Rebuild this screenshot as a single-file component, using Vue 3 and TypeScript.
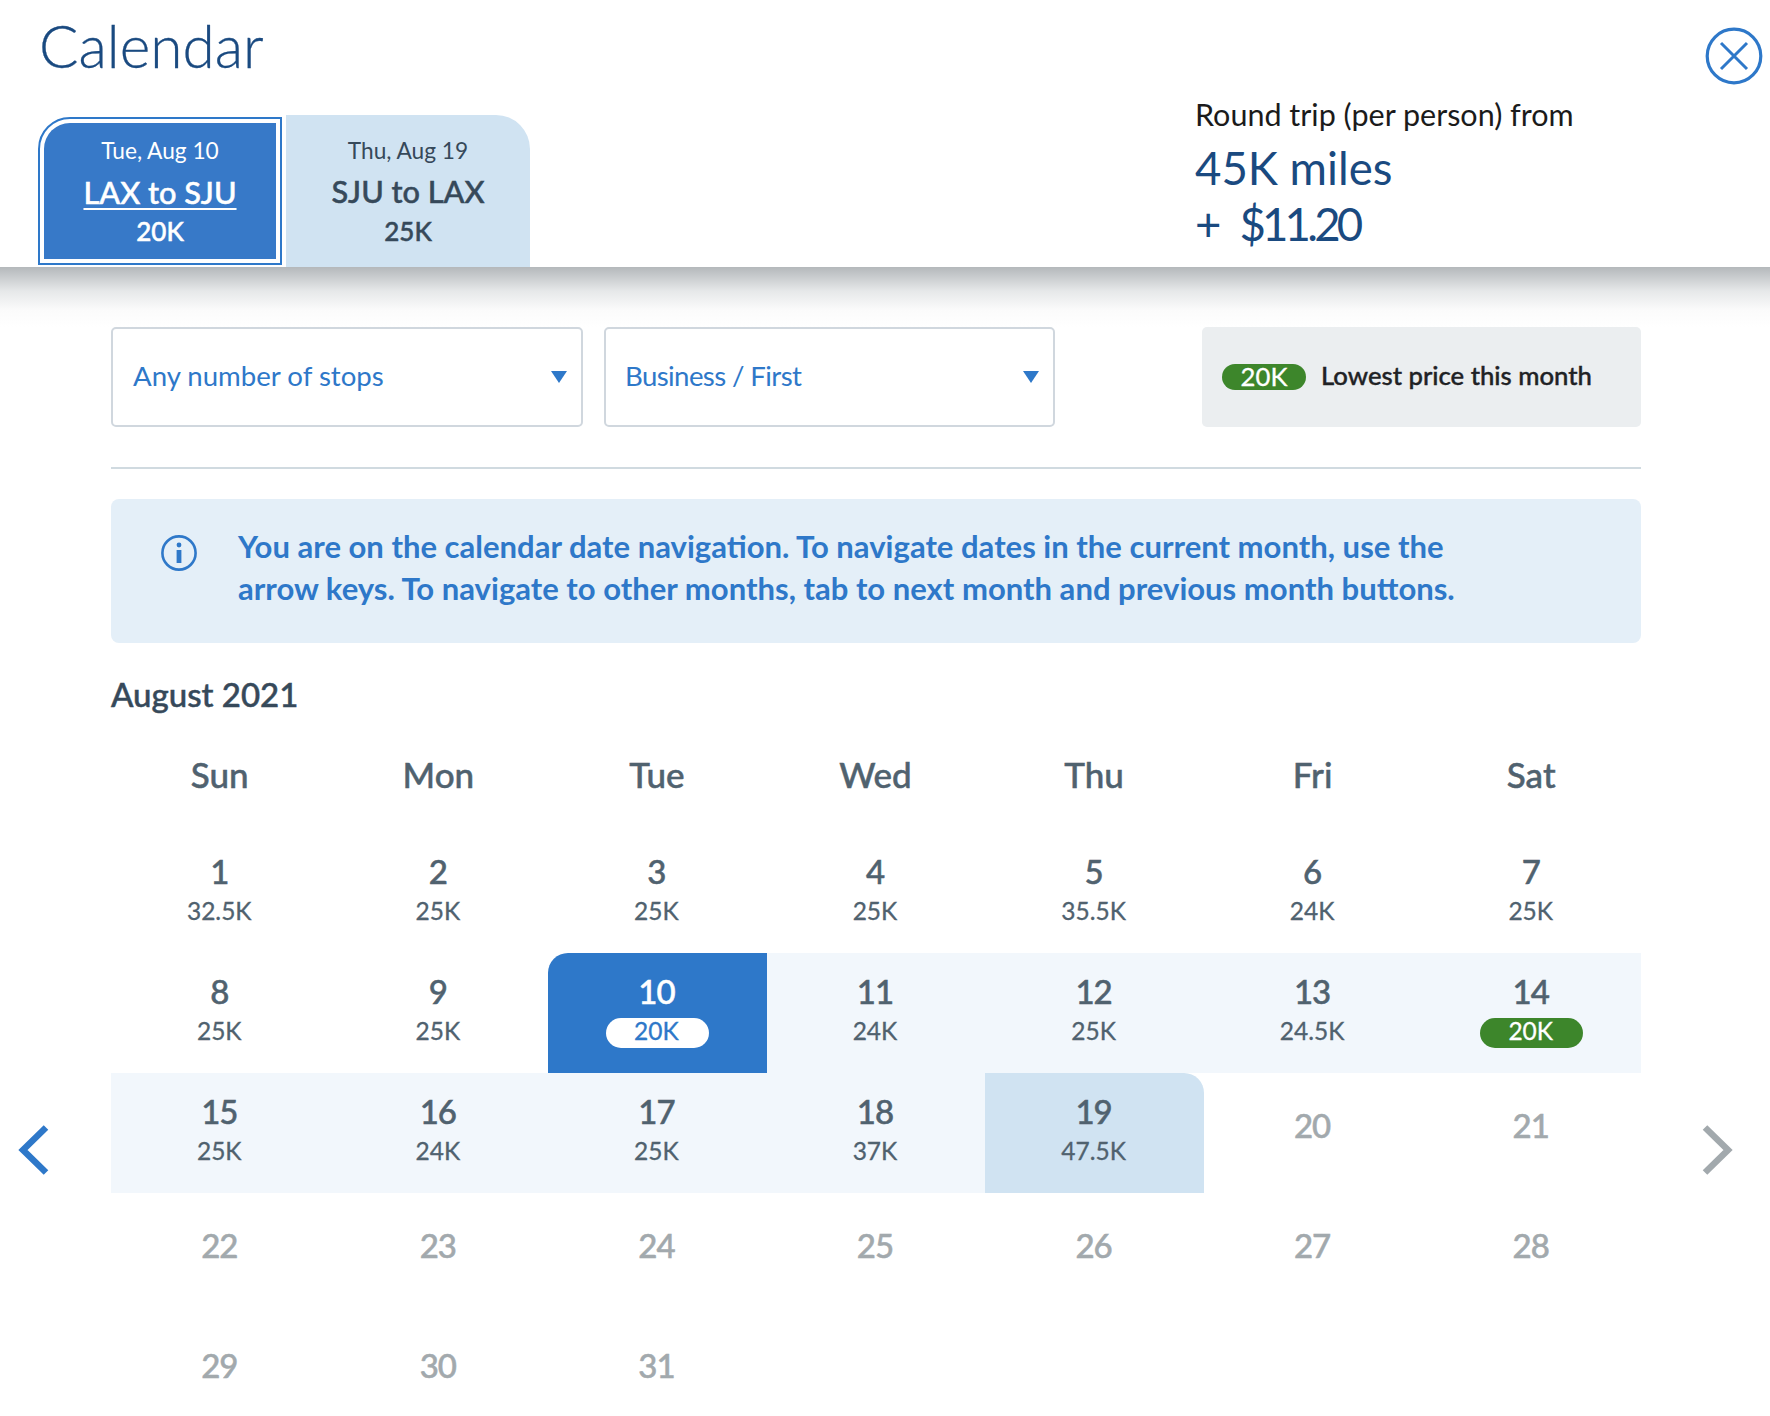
<script setup lang="ts">
interface Cell { day: number | null; price?: string; kind?: string; lowest?: boolean }
const weekdays = ['Sun', 'Mon', 'Tue', 'Wed', 'Thu', 'Fri', 'Sat']
const prices: Record<number, string> = {
  1: '32.5K', 2: '25K', 3: '25K', 4: '25K', 5: '35.5K', 6: '24K', 7: '25K',
  8: '25K', 9: '25K', 10: '20K', 11: '24K', 12: '25K', 13: '24.5K', 14: '20K',
  15: '25K', 16: '24K', 17: '25K', 18: '37K', 19: '47.5K'
}
const cells: Cell[] = []
for (let d = 1; d <= 31; d++) {
  let kind = ''
  if (d === 10) kind = 'start'
  else if (d === 19) kind = 'end'
  else if (d > 10 && d < 19) kind = 'range'
  else if (d > 19) kind = 'off'
  cells.push({ day: d, price: prices[d], kind, lowest: d === 14 })
}
</script>

<template>
  <div class="page">
    <header class="head">
      <div class="head-left">
        <h1 class="title">Calendar</h1>
        <div class="tabs">
          <div class="tab tab-active">
            <div class="tab-inner">
              <span class="tab-date">Tue, Aug 10</span>
              <span class="tab-route tab-link">LAX to SJU</span>
              <span class="tab-price">20K</span>
            </div>
          </div>
          <div class="tab tab-next">
            <span class="tab-date">Thu, Aug 19</span>
            <span class="tab-route">SJU to LAX</span>
            <span class="tab-price">25K</span>
          </div>
        </div>
      </div>
      <div class="fare">
        <div class="fare-label">Round trip (per person) from</div>
        <div class="fare-value">45K miles</div>
        <div class="fare-value fare-money">+ $11.20</div>
      </div>
      <svg class="close" width="58" height="58" viewBox="0 0 58 58" fill="none" stroke="#2e78c9">
        <circle cx="29" cy="29" r="26.8" stroke-width="3.2" />
        <path d="M16 16 L42 42 M42 16 L16 42" stroke-width="3" />
      </svg>
    </header>
    <div class="shade"></div>

    <main class="main">
      <div class="toolbar">
        <div class="select select-stops">
          <span class="select-label">Any number of stops</span>
          <svg width="16" height="12" viewBox="0 0 16 12"><path d="M0 0H16L8 12Z" fill="#2e78c9" /></svg>
        </div>
        <div class="select select-cabin">
          <span class="select-label">Business / First</span>
          <svg width="16" height="12" viewBox="0 0 16 12"><path d="M0 0H16L8 12Z" fill="#2e78c9" /></svg>
        </div>
        <div class="legend">
          <span class="legend-pill">20K</span>
          <span class="legend-text">Lowest price this month</span>
        </div>
      </div>
      <div class="rule"></div>
      <div class="info">
        <svg class="info-icon" width="36" height="36" viewBox="0 0 36 36" fill="none">
          <circle cx="18" cy="18" r="16.6" stroke="#2e78c9" stroke-width="2.6" />
          <circle cx="18" cy="10" r="2.4" fill="#2e78c9" />
          <rect x="15.6" y="15" width="4.8" height="13" fill="#2e78c9" />
        </svg>
        <p class="info-text">You are on the calendar date navigation. To navigate dates in the current month, use the<br />arrow keys. To navigate to other months, tab to next month and previous month buttons.</p>
      </div>
      <h2 class="month">August 2021</h2>
      <div class="weekdays">
        <div v-for="w in weekdays" :key="w" class="weekday">{{ w }}</div>
      </div>
      <div class="grid">
        <div v-for="c in cells" :key="c.day ?? 0" class="cell" :class="c.kind">
          <span class="num">{{ c.day }}</span>
          <span v-if="c.price" class="price" :class="{ low: c.lowest }">{{ c.price }}</span>
        </div>
      </div>
    </main>

    <svg class="nav nav-prev" width="32" height="50" viewBox="0 0 32 50" fill="none">
      <path d="M29 2.5 L6 25 L29 47.5" stroke="#2e78c9" stroke-width="6.5" />
    </svg>
    <svg class="nav nav-next" width="32" height="50" viewBox="0 0 32 50" fill="none">
      <path d="M3 2.5 L26 25 L3 47.5" stroke="#a2a9ad" stroke-width="6.5" />
    </svg>
  </div>
</template>

<style>
html, body { margin: 0; background: #fff; }
</style>

<style scoped>
.page {
  position: relative;
  width: 1770px;
  height: 1416px;
  overflow: hidden;
  background: #fff;
  font-family: Lato, "Open Sans", sans-serif;
  color: #50626f;
}
.head {
  display: flex;
  height: 267px;
  padding-left: 38px;
  box-sizing: border-box;
}
.head-left {
  width: 1157px;
  display: flex;
  flex-direction: column;
}
.title {
  margin: 0;
  height: 115px;
  padding-left: 1px;
  font-size: 58.5px;
  font-weight: 300;
  line-height: 90px;
  color: #1a4a80;
  -webkit-text-stroke: 0.3px currentColor;
}
.tabs {
  display: flex;
  align-items: flex-end;
  gap: 4px;
}
.tab {
  box-sizing: border-box;
  width: 244px;
  text-align: center;
}
.tab-date, .tab-route, .tab-price { display: block; }
.tab-active {
  height: 148px;
  margin-bottom: 2px;
  padding: 4px;
  border: 2px solid #2e78c9;
  border-top-left-radius: 32px;
}
.tab-inner {
  height: 136px;
  background: #3779c8;
  border-top-left-radius: 26px;
  color: #fff;
  padding-top: 13px;
  box-sizing: border-box;
}
.tab-inner .tab-price { margin-top: 2px; }
.tab-next {
  height: 152px;
  background: #d0e3f2;
  border-top-right-radius: 34px;
  padding-top: 21px;
  color: #36495a;
}
.tab-next .tab-route { margin-top: 7px; }
.tab-date {
  font-size: 22.7px;
  line-height: 30px;
}
.tab-route {
  margin-top: 8px;
  font-size: 30.7px;
  font-weight: 500;
  line-height: 38px;
  -webkit-text-stroke: 0.5px currentColor;
}
.tab-link { text-decoration: underline; text-underline-offset: 4px; text-decoration-thickness: 2px; }
.tab-price {
  margin-top: 3px;
  font-size: 26px;
  font-weight: 500;
  line-height: 34px;
  -webkit-text-stroke: 0.5px currentColor;
}
.fare { padding-top: 96px; }
.fare-label {
  font-size: 30.5px;
  line-height: 36px;
  color: #1b1b1b;
}
.fare-value {
  font-size: 45.5px;
  line-height: 56px;
  color: #1a4a80;
}
.fare-label + .fare-value { margin-top: 8px; }
.fare-money { letter-spacing: -3.8px; word-spacing: 14px; }
.close {
  position: absolute;
  left: 1705px;
  top: 27px;
}
.shade {
  height: 60px;
  background: linear-gradient(#b4b8bb, #e6e8e9 40%, #fbfbfb 72%, #fff);
}
.main {
  padding: 0 129px 0 111px;
}
.toolbar {
  display: flex;
  height: 100px;
}
.select {
  box-sizing: border-box;
  display: flex;
  align-items: center;
  justify-content: space-between;
  border: 2px solid #d0d7de;
  border-radius: 5px;
  padding: 0 14px 0 20px;
  font-size: 27.6px;
  color: #2e78c9;
}
.select-label { padding-bottom: 4px; }
.select-stops { width: 472px; }
.select-cabin { width: 451px; margin-left: 21px; padding-left: 19px; }
.select-cabin .select-label { letter-spacing: -0.6px; }
.legend {
  box-sizing: border-box;
  width: 439px;
  margin-left: auto;
  display: flex;
  align-items: center;
  gap: 15px;
  padding-left: 20px;
  background: #ebeef0;
  border-radius: 5px;
  font-size: 25.7px;
  font-weight: 500;
  color: #1f2225;
}
.legend-text {
  padding-bottom: 4px;
  -webkit-text-stroke: 0.4px currentColor;
}
.legend-pill {
  width: 84px;
  height: 26px;
  border-radius: 13px;
  background: #3d862b;
  color: #fff;
  text-align: center;
  line-height: 24px;
  font-weight: 400;
  -webkit-text-stroke: 0.3px currentColor;
}
.rule {
  height: 2px;
  margin-top: 40px;
  background: #d0dae0;
}
.info {
  box-sizing: border-box;
  height: 144px;
  margin-top: 30px;
  display: flex;
  padding: 26px 0 0 50px;
  gap: 41px;
  background: #e4eff8;
  border-radius: 8px;
}
.info-icon { margin-top: 10px; flex: none; }
.info-text {
  margin: 0;
  font-size: 31.05px;
  font-weight: 700;
  line-height: 42px;
  color: #2e78c9;
  white-space: nowrap;
}
.month {
  margin: 30px 0 0;
  font-size: 33px;
  font-weight: 500;
  line-height: 42px;
  color: #36495a;
  -webkit-text-stroke: 0.5px currentColor;
}
.weekdays {
  display: grid;
  grid-template-columns: repeat(7, 1fr);
  margin-top: 39px;
  height: 79px;
}
.weekday {
  text-align: center;
  font-size: 35px;
  font-weight: 500;
  line-height: 40px;
  padding-right: 1px;
  -webkit-text-stroke: 0.5px currentColor;
}
.grid {
  display: grid;
  grid-template-columns: repeat(7, 1fr);
  grid-auto-rows: 120px;
}
.cell {
  display: flex;
  flex-direction: column;
  align-items: center;
  padding-top: 17px;
  box-sizing: border-box;
}
.num {
  font-size: 33px;
  font-weight: 500;
  line-height: 42px;
  letter-spacing: -1px;
  padding-right: 2px;
  -webkit-text-stroke: 0.5px currentColor;
}
.price {
  box-sizing: border-box;
  width: 103px;
  height: 30px;
  margin-top: 6px;
  padding-right: 2px;
  border-radius: 15px;
  font-size: 24.5px;
  line-height: 26px;
  text-align: center;
  -webkit-text-stroke: 0.3px currentColor;
}
.price.low { background: #3d862b; color: #fff; }
.range { background: #f2f7fc; }
.start { background: #2e78c9; border-top-left-radius: 20px; color: #fff; }
.start .price { background: #fff; color: #2e78c9; }
.end { background: #d0e3f2; border-top-right-radius: 20px; }
.off { padding-top: 31px; color: #a2a9ad; }
.nav { position: absolute; top: 1125px; }
.nav-prev { left: 17px; }
.nav-next { left: 1702px; }
</style>
